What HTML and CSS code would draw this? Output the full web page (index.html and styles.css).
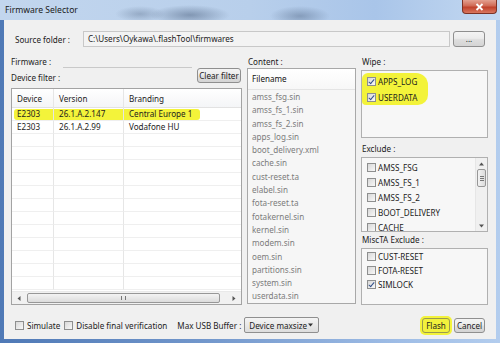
FILE: index.html
```html
<!DOCTYPE html>
<html>
<head>
<meta charset="utf-8">
<link rel="stylesheet" href="styles.css">
</head>
<body>
<div class="window">
  <div class="titlebar">
    <span class="title">Firmware Selector</span>
    <div class="close"><svg width="9" height="8" viewBox="0 0 9 8"><path d="M1.5 1 L7.5 7 M7.5 1 L1.5 7" stroke="#fff" stroke-width="1.8"/></svg></div>
  </div>
  <div class="client">
    <div class="source-row">
      <span class="src-label">Source folder :</span>
      <div class="field">C:\Users\Oykawa\.flashTool\firmwares</div>
      <div class="btn dots">...</div>
    </div>

    <div class="main">
      <div class="col-left">
        <div class="filter-grid">
          <span class="fw-label">Firmware :</span>
          <div class="fw-field"></div>
          <span class="df-label">Device filter :</span>
          <div class="btn clear">Clear filter</div>
        </div>
        <div class="table">
          <div class="thead">
            <div class="cell">Device</div><div class="cell">Version</div><div class="cell">Branding</div>
          </div>
          <div class="tbody">
            <div class="row hl"><div class="cell">E2303</div><div class="cell">26.1.A.2.147</div><div class="cell">Central Europe 1</div></div>
            <div class="row"><div class="cell">E2303</div><div class="cell">26.1.A.2.99</div><div class="cell">Vodafone HU</div></div>
            <div class="row"><div class="cell"></div><div class="cell"></div><div class="cell"></div></div>
            <div class="row"><div class="cell"></div><div class="cell"></div><div class="cell"></div></div>
            <div class="row"><div class="cell"></div><div class="cell"></div><div class="cell"></div></div>
            <div class="row"><div class="cell"></div><div class="cell"></div><div class="cell"></div></div>
            <div class="row"><div class="cell"></div><div class="cell"></div><div class="cell"></div></div>
            <div class="row"><div class="cell"></div><div class="cell"></div><div class="cell"></div></div>
            <div class="row"><div class="cell"></div><div class="cell"></div><div class="cell"></div></div>
            <div class="row"><div class="cell"></div><div class="cell"></div><div class="cell"></div></div>
            <div class="row"><div class="cell"></div><div class="cell"></div><div class="cell"></div></div>
            <div class="row"><div class="cell"></div><div class="cell"></div><div class="cell"></div></div>
            <div class="row"><div class="cell"></div><div class="cell"></div><div class="cell"></div></div>
            <div class="row"><div class="cell"></div><div class="cell"></div><div class="cell"></div></div>
          </div>
          <div class="hscroll">
            <div class="arrow"><svg width="4" height="5" viewBox="0 0 4 5"><path d="M3.5 0 L0.5 2.5 L3.5 5 Z" fill="#555"/></svg></div>
            <div class="thumb"><span class="grip"></span></div>
            <div class="arrow"><svg width="4" height="5" viewBox="0 0 4 5"><path d="M0.5 0 L3.5 2.5 L0.5 5 Z" fill="#555"/></svg></div>
          </div>
        </div>
      </div>

      <div class="col-mid">
        <span class="sec-label first">Content :</span>
        <div class="list">
          <div class="list-head">Filename</div>
          <div class="items">
            <div>amss_fsg.sin</div>
            <div>amss_fs_1.sin</div>
            <div>amss_fs_2.sin</div>
            <div>apps_log.sin</div>
            <div>boot_delivery.xml</div>
            <div>cache.sin</div>
            <div>cust-reset.ta</div>
            <div>elabel.sin</div>
            <div>fota-reset.ta</div>
            <div>fotakernel.sin</div>
            <div>kernel.sin</div>
            <div>modem.sin</div>
            <div>oem.sin</div>
            <div>partitions.sin</div>
            <div>system.sin</div>
            <div>userdata.sin</div>
          </div>
        </div>
      </div>

      <div class="col-right">
        <span class="sec-label first">Wipe :</span>
        <div class="box wipe">
          <div class="mark"></div>
          <div class="chk h16"><span class="cb on"></span>APPS_LOG</div>
          <div class="chk h16"><span class="cb on"></span>USERDATA</div>
        </div>
        <span class="sec-label">Exclude :</span>
        <div class="box exclude">
          <div class="ex-items">
            <div class="chk h15"><span class="cb"></span>AMSS_FSG</div>
            <div class="chk h15"><span class="cb"></span>AMSS_FS_1</div>
            <div class="chk h15"><span class="cb"></span>AMSS_FS_2</div>
            <div class="chk h15"><span class="cb"></span>BOOT_DELIVERY</div>
            <div class="chk h15"><span class="cb"></span>CACHE</div>
          </div>
          <div class="vscroll">
            <div class="varrow"><svg width="5" height="4" viewBox="0 0 5 4"><path d="M0 3.5 L2.5 0.5 L5 3.5 Z" fill="#555"/></svg></div>
            <div class="vthumb"><span></span><span></span><span></span></div>
            <div class="vtrack"></div>
            <div class="varrow"><svg width="5" height="4" viewBox="0 0 5 4"><path d="M0 0.5 L2.5 3.5 L5 0.5 Z" fill="#555"/></svg></div>
          </div>
        </div>
        <span class="sec-label misc">MiscTA Exclude :</span>
        <div class="box misc-box">
          <div class="chk h14"><span class="cb"></span>CUST-RESET</div>
          <div class="chk h14"><span class="cb"></span>FOTA-RESET</div>
          <div class="chk h14"><span class="cb on"></span>SIMLOCK</div>
        </div>
      </div>
    </div>

    <div class="bottom-row">
      <div class="chk sim"><span class="cb"></span>Simulate</div>
      <div class="chk dis"><span class="cb"></span>Disable final verification</div>
      <span class="usb-label">Max USB Buffer :</span>
      <div class="select"><span>Device maxsize</span><svg width="5" height="4" viewBox="0 0 5 4"><path d="M0 0.5 L2.5 3.5 L5 0.5 Z" fill="#333"/></svg></div>
      <div class="btn flash">Flash</div>
      <div class="btn cancel">Cancel</div>
    </div>
  </div>
</div>
</body>
</html>
```

FILE: styles.css
```css
* { box-sizing: border-box; }

body {
  margin: 0;
  width: 500px;
  height: 343px;
  overflow: hidden;
  font-family: "Noto Sans", "Open Sans", sans-serif;
  font-size: 8.1px;
  color: #1c1c1c;
}

.window {
  width: 500px;
  height: 343px;
  display: flex;
  flex-direction: column;
  background: linear-gradient(90deg, #4f79b6 0%, #7196cb 40%, #9fbde6 80%, #b3cdee 100%);
}

.titlebar {
  position: relative;
  height: 20px;
  flex: none;
  display: flex;
  align-items: center;
  padding-left: 5px;
  background:
    radial-gradient(ellipse 40px 10px at 190px 15px, rgba(60,80,110,0.45), transparent),
    radial-gradient(ellipse 30px 10px at 300px 16px, rgba(50,70,100,0.35), transparent),
    radial-gradient(ellipse 25px 8px at 140px 14px, rgba(60,80,110,0.3), transparent),
    linear-gradient(90deg, #c2d6ee 0%, #b8cfeb 50%, #a9c5e9 75%, #c3d8f1 100%);
}

.title {
  font-size: 8.6px;
  color: #1a1a1a;
}

.close {
  position: absolute;
  top: 0;
  right: 3px;
  width: 35px;
  height: 14px;
  border: 1px solid #7d3225;
  border-top: none;
  border-radius: 0 0 4px 4px;
  background: linear-gradient(#e3a090 0%, #d06a55 45%, #c0412b 55%, #d9775f 100%);
  display: flex;
  align-items: center;
  justify-content: center;
}

.client {
  flex: 1;
  margin: 0 4px 4px;
  background: #f0f0f0;
  display: flex;
  flex-direction: column;
}

/* source row */
.source-row {
  margin-top: 11px;
  height: 16px;
  display: flex;
  align-items: center;
  padding: 0 11px;
}
.src-label { width: 68px; }
.field {
  flex: 1;
  height: 16px;
  line-height: 14px;
  padding-left: 4px;
  border: 1px solid #c8c8c8;
  background: #f3f3f3;
}

.btn {
  height: 16px;
  display: flex;
  align-items: center;
  justify-content: center;
  border: 1px solid #8f8f8f;
  border-radius: 3px;
  background: linear-gradient(#f4f4f4 0%, #ececec 45%, #dedede 55%, #d4d4d4 100%);
  color: #1c1c1c;
  white-space: nowrap;
}
.dots { width: 32px; margin-left: 3px; line-height: 8px; }

/* main */
.main {
  margin-top: 9px;
  height: 249px;
  padding-left: 7px;
  display: grid;
  grid-template-columns: 231px 109px 127px;
  column-gap: 5px;
}

.col-left { display: flex; flex-direction: column; }

.filter-grid {
  height: 32px;
  display: grid;
  grid-template-columns: 52px 129px 1fr 45px;
  grid-template-rows: 12px 20px;
}
.fw-label { grid-column: 1; grid-row: 1; line-height: 12px; }
.fw-field {
  grid-column: 2; grid-row: 1;
  border-bottom: 1px solid #c9c9c9;
}
.df-label { grid-column: 1 / 3; grid-row: 2; align-self: center; line-height: 12px; }
.clear {
  grid-column: 4; grid-row: 2;
  align-self: start;
  height: 15px;
  margin-right: 1px;
}

.table {
  height: 217px;
  border: 1px solid #a3a3a3;
  background: #fff;
  display: flex;
  flex-direction: column;
  overflow: hidden;
}
.thead, .row {
  display: grid;
  grid-template-columns: 42px 70px 1fr;
}
.thead {
  height: 19px;
  flex: none;
  align-items: center;
  background: linear-gradient(#ffffff, #f4f5f7);
  border-bottom: 1px solid #e2e2e2;
}
.thead .cell { padding-left: 5px; line-height: 19px; border-right: 1px solid #e6e6e6; }
.thead .cell:last-child { border-right: none; }

.tbody { flex: 1; overflow: hidden; }
.row { height: 13px; position: relative; }
.row .cell {
  padding-left: 5px;
  line-height: 12px;
  border-bottom: 1px solid #efefef;
  border-right: 1px solid #e6e6e6;
  position: relative;
  z-index: 1;
  white-space: nowrap;
}
.row .cell:last-child { border-right: none; }
.row.hl::before {
  content: "";
  position: absolute;
  left: 2px;
  top: 1px;
  width: 186px;
  height: 11px;
  border-radius: 3px;
  background: #f3f33a;
  z-index: 0;
}

.hscroll {
  height: 13px;
  flex: none;
  display: flex;
  align-items: center;
  background: #f1f1f1;
  border-top: 1px solid #e9e9e9;
  padding: 0 1px;
}
.hscroll .arrow { width: 12px; display: flex; justify-content: center; }
.thumb {
  flex: 1;
  height: 10px;
  margin: 0 8px 0 2px;
  border: 1px solid #979797;
  border-radius: 2px;
  background: linear-gradient(#f3f3f3, #dcdcdc);
  display: flex;
  align-items: center;
  justify-content: center;
}
.grip {
  width: 5px;
  height: 4px;
  border-left: 1px solid #777;
  border-right: 1px solid #777;
  background: linear-gradient(90deg, transparent 1.5px, #777 1.5px, #777 2.5px, transparent 2.5px);
}

/* middle */
.col-mid, .col-right { display: flex; flex-direction: column; }
.sec-label { height: 12px; line-height: 12px; margin: 5px 0 2px 1px; white-space: nowrap; }
.sec-label.first { margin-top: 0; margin-bottom: 0; }
.col-right .sec-label.first { margin-bottom: 2px; }
.sec-label.misc { margin-top: 2px; }

.list {
  height: 236px;
  border: 1px solid #a8a8a8;
  background: #f6f6f6;
  overflow: hidden;
}
.list-head {
  height: 21px;
  line-height: 20px;
  padding-left: 4px;
  background: linear-gradient(#ffffff, #f7f7f7);
  border-bottom: 1px solid #e4e4e4;
  color: #111;
}
.items div {
  height: 13.3px;
  line-height: 13px;
  padding-left: 4px;
  color: #7c7c7c;
  white-space: nowrap;
}

/* right */
.box {
  border: 1px solid #b0b0b0;
  background: #f7f7f7;
  position: relative;
  overflow: hidden;
}
.wipe { height: 68px; padding-top: 2px; }
.exclude { height: 75px; display: flex; }
.misc-box { height: 57px; }

.ex-items { flex: 1; padding-top: 2px; }

.chk {
  display: flex;
  align-items: center;
  padding-left: 5px;
  white-space: nowrap;
  position: relative;
  z-index: 1;
}
.h16 { height: 16px; }
.h15 { height: 15px; }
.h14 { height: 14px; }

.cb {
  width: 9px;
  height: 9px;
  flex: none;
  margin-right: 2px;
  border: 1px solid #8e8f8f;
  background: linear-gradient(135deg, #d8d8d8, #f8f8f8);
  position: relative;
}
.cb.on::after {
  content: "";
  position: absolute;
  left: 2px;
  top: 0px;
  width: 2px;
  height: 5px;
  border-right: 1.5px solid #32508a;
  border-bottom: 1.5px solid #32508a;
  transform: rotate(40deg);
}

.mark {
  position: absolute;
  left: 0px;
  top: 2px;
  width: 66px;
  height: 32px;
  border-radius: 6px 12px 10px 4px;
  background: #f3f33a;
  z-index: 0;
}

.vscroll {
  width: 12px;
  display: flex;
  flex-direction: column;
  background: #f0f0f0;
  border-left: 1px solid #e6e6e6;
}
.varrow { height: 11px; display: flex; align-items: center; justify-content: center; }
.vthumb {
  height: 18px;
  margin: 0 1px;
  border: 1px solid #979797;
  border-radius: 2px;
  background: linear-gradient(90deg, #f3f3f3, #dcdcdc);
  display: flex;
  flex-direction: column;
  align-items: center;
  justify-content: center;
  gap: 1px;
}
.vthumb span { width: 4px; height: 1px; background: #777; }
.vtrack { flex: 1; }

/* bottom */
.bottom-row {
  margin-top: 12px;
  height: 16px;
  display: flex;
  align-items: center;
  padding: 0 11px;
}
.bottom-row .chk { padding-left: 0; }
.bottom-row .cb { margin-right: 3px; }
.sim { margin-right: 4px; }
.dis { margin-right: 10px; }
.usb-label { margin-right: 3px; white-space: nowrap; }
.select {
  width: 75px;
  height: 16px;
  flex: none;
  border: 1px solid #8f8f8f;
  border-radius: 2px;
  background: linear-gradient(#f4f4f4, #dddddd);
  display: flex;
  align-items: center;
  justify-content: space-between;
  padding: 0 5px 0 4px;
  white-space: nowrap;
}
.flash {
  margin-left: auto;
  width: 28px;
  height: 15px;
  background: #f2f23c;
  border-color: #9a9a50;
  box-shadow: 0 0 0 2px #f3f33a;
}
.cancel { width: 31px; height: 15px; margin-left: 4px; }
```
